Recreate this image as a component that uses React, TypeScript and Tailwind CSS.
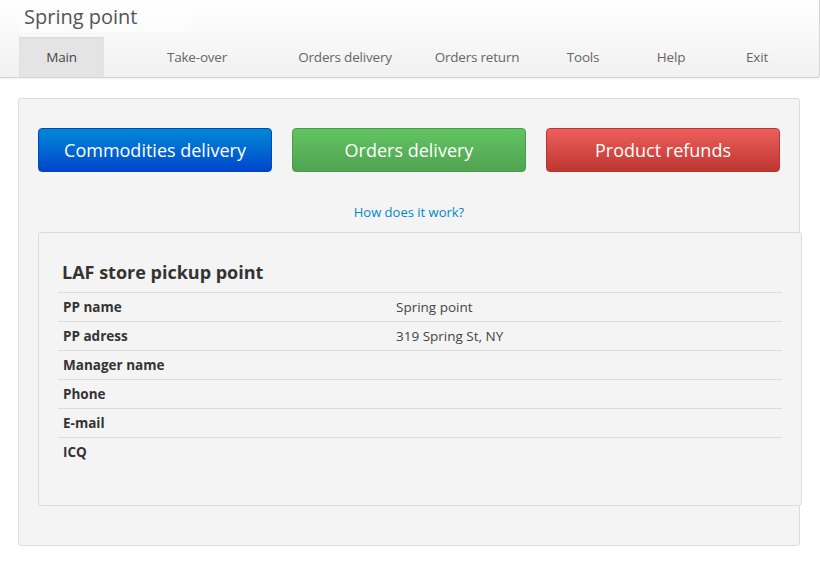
import React from 'react';

const navItems = [
  { label: 'Main', w: 'w-[85px]', active: true },
  { label: 'Take-over', w: 'w-[186px]' },
  { label: 'Orders delivery', w: 'w-[110px]' },
  { label: 'Orders return', w: 'w-[154px]' },
  { label: 'Tools', w: 'w-[58px]' },
  { label: 'Help', w: 'w-[118px]' },
  { label: 'Exit', w: 'w-[54px]' },
];

const rows = [
  { label: 'PP name', value: 'Spring point' },
  { label: 'PP adress', value: '319 Spring St, NY' },
  { label: 'Manager name', value: '' },
  { label: 'Phone', value: '' },
  { label: 'E-mail', value: '' },
  { label: 'ICQ', value: '' },
];

const App: React.FC = () => {
  return (
    <div className="min-h-screen bg-white text-[#333]" style={{ fontFamily: '"Open Sans", "Noto Sans", sans-serif' }}>
      {/* header */}
      <div className="w-[820px] h-[78px] bg-gradient-to-b from-white to-[#f1f1f1] border-b border-r border-[#d4d4d4] rounded-br-[3px] shadow-[0_1px_2px_rgba(0,0,0,0.06)]">
        <div className="h-[37px] pt-[4px]">
          <div className="ml-[18px] w-[172px] h-[28px] bg-white/40 pl-[6px] text-[20px] leading-[26px] text-[#555]">Spring point</div>
        </div>
        <nav className="flex pl-[19px] h-[40px]">
          {navItems.map((item) => (
            <a
              key={item.label}
              className={`${item.w} flex items-center justify-center text-[13.5px] tracking-[-0.2px] ${
                item.active ? 'bg-[#e4e4e4] text-[#444] shadow-[inset_0_1px_2px_rgba(0,0,0,0.06)]' : 'text-[#666]'
              }`}
            >
              {item.label}
            </a>
          ))}
        </nav>
      </div>

      {/* main panel */}
      <div className="ml-[18px] mt-[20px] w-[782px] h-[448px] bg-[#f4f4f4] border border-[#dddddd] rounded-[3px] pt-[29px] pl-[19px]">
        <div className="flex gap-[20px]">
          <button className="w-[234px] h-[44px] rounded-[4px] border border-[#0048b8] bg-gradient-to-b from-[#0088d6] to-[#0044cc] text-white text-[18px] font-medium">
            Commodities delivery
          </button>
          <button className="w-[234px] h-[44px] rounded-[4px] border border-[#4b9a4b] bg-gradient-to-b from-[#62c462] to-[#51a351] text-white text-[18px] font-medium">
            Orders delivery
          </button>
          <button className="w-[234px] h-[44px] rounded-[4px] border border-[#b8352f] bg-gradient-to-b from-[#ee5f5b] to-[#bd362f] text-white text-[18px] font-medium">
            Product refunds
          </button>
        </div>

        <div className="w-[742px] text-center mt-[30px] h-[18px] leading-[18px]">
          <a className="text-[13px] text-[#0088cc]">How does it work?</a>
        </div>

        <div className="mt-[12px] w-[764px] h-[274px] bg-[#f4f4f4] border border-[#dddddd] rounded-[3px] px-[19px] pt-[27px]">
          <h2 className="pl-[4px] text-[18px] leading-[24px] font-bold text-[#333] mb-[8px]">LAF store pickup point</h2>
          <table className="w-full text-[13.5px] border-collapse">
            <tbody>
              {rows.map((r) => (
                <tr key={r.label} className="h-[29px] border-t border-[#dddddd]">
                  <td className="pl-[5px] w-[338px] font-bold text-[#333]">{r.label}</td>
                  <td className="text-[#444]">{r.value}</td>
                </tr>
              ))}
            </tbody>
          </table>
        </div>
      </div>
    </div>
  );
};

export default App;
